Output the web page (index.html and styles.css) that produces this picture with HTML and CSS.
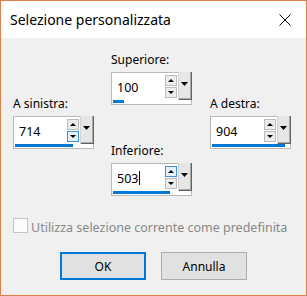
FILE: index.html
```html
<!DOCTYPE html>
<html lang="it">
<head>
    <meta charset="UTF-8">
    <meta name="viewport" content="width=device-width, initial-scale=1.0">
    <title>Selezione personalizzata</title>
    <link rel="stylesheet" href="styles.css">
</head>
<body>
    <div class="window">
        <div class="titlebar">
            <span class="title">Selezione personalizzata</span>
            <svg class="close" width="12" height="12" viewBox="0 0 12 12">
                <path d="M0.5 0.5 L11.5 11.5 M11.5 0.5 L0.5 11.5" stroke="#000" stroke-width="1" fill="none"/>
            </svg>
        </div>

        <div class="fields">
            <div class="group group-side">
                <div class="label">A sinistra:</div>
                <div class="spin">
                    <div class="spin-top">
                        <span class="spin-value">714</span>
                        <span class="spin-arrows">
                            <span class="arrow"><span class="tri tri-up"></span></span>
                            <span class="arrow active"><span class="tri tri-down"></span></span>
                        </span>
                        <span class="spin-drop"><span class="drop-tri"></span></span>
                    </div>
                    <div class="spin-bar" style="width: 58px"></div>
                </div>
            </div>

            <div class="col-mid">
                <div class="group">
                    <div class="label">Superiore:</div>
                    <div class="spin">
                        <div class="spin-top">
                            <span class="spin-value">100</span>
                            <span class="spin-arrows">
                                <span class="arrow"><span class="tri tri-up"></span></span>
                                <span class="arrow"><span class="tri tri-down"></span></span>
                            </span>
                            <span class="spin-drop"><span class="drop-tri"></span></span>
                        </div>
                        <div class="spin-bar" style="width: 11px"></div>
                    </div>
                </div>
                <div class="group">
                    <div class="label">Inferiore:</div>
                    <div class="spin">
                        <div class="spin-top">
                            <span class="spin-value">503<span class="caret"></span></span>
                            <span class="spin-arrows">
                                <span class="arrow active"><span class="tri tri-up"></span></span>
                                <span class="arrow"><span class="tri tri-down"></span></span>
                            </span>
                            <span class="spin-drop"><span class="drop-tri"></span></span>
                        </div>
                        <div class="spin-bar" style="width: 57px"></div>
                    </div>
                </div>
            </div>

            <div class="group group-side">
                <div class="label">A destra:</div>
                <div class="spin">
                    <div class="spin-top">
                        <span class="spin-value">904</span>
                        <span class="spin-arrows">
                            <span class="arrow"><span class="tri tri-up"></span></span>
                            <span class="arrow"><span class="tri tri-down"></span></span>
                        </span>
                        <span class="spin-drop"><span class="drop-tri"></span></span>
                    </div>
                    <div class="spin-bar" style="width: 73px"></div>
                </div>
            </div>
        </div>

        <div class="check">
            <span class="check-box"></span>
            <span class="check-text">Utilizza selezione corrente come predefinita</span>
        </div>

        <div class="buttons">
            <button class="btn btn-default">OK</button>
            <button class="btn">Annulla</button>
        </div>
    </div>
</body>
</html>
```

FILE: styles.css
```css
* {
    margin: 0;
    padding: 0;
    box-sizing: border-box;
}
body {
    font-family: "Noto Sans", "Open Sans", sans-serif;
    font-size: 12px;
    color: #000;
    background: #f0f0f0;
}
.window {
    width: 307px;
    height: 296px;
    border: 1px solid #db8048;
    background: #f0f0f0;
}
.titlebar {
    height: 37px;
    background: #fff;
    display: flex;
    align-items: center;
    justify-content: space-between;
    padding-left: 9px;
}
.title {
    font-size: 14px;
}
.close {
    margin-right: 15px;
}
.fields {
    display: grid;
    grid-template-columns: 98px 99px 81px;
    height: 144px;
    margin-top: 14px;
    padding-left: 12px;
}
.col-mid {
    display: flex;
    flex-direction: column;
    justify-content: space-between;
}
.group {
    width: 81px;
}
.group-side {
    align-self: start;
    margin-top: 44px;
}
.label {
    line-height: 16px;
    margin-bottom: 4px;
}
.spin {
    height: 33px;
    border: 1px solid #b9b9b9;
    background: #fff;
    display: flex;
    flex-direction: column;
}
.spin-top {
    flex: 1;
    display: flex;
}
.spin-value {
    flex: 1;
    display: flex;
    align-items: center;
    padding-left: 5px;
    padding-top: 1px;
    font-size: 12.5px;
}
.caret {
    display: inline-block;
    width: 1px;
    height: 14px;
    background: #000;
    margin-left: 1px;
}
.spin-arrows {
    display: flex;
    flex-direction: column;
    justify-content: center;
    gap: 1px;
    margin-right: 1px;
}
.arrow {
    width: 12px;
    height: 11px;
    border: 1px solid #bcbcbc;
    background: #ececec;
    display: flex;
    align-items: center;
    justify-content: center;
}
.arrow.active {
    border-color: #3c8fdc;
    background: #e5f1fb;
}
.tri {
    width: 0;
    height: 0;
    border-left: 3px solid transparent;
    border-right: 3px solid transparent;
}
.tri-up {
    border-bottom: 3px solid #000;
}
.tri-down {
    border-top: 3px solid #000;
}
.spin-drop {
    width: 14px;
    margin: -1px -1px 0 0;
    background: #e6e6e6;
    border-left: 1px solid #d4d4d4;
    box-shadow: inset -1px -1px 0 #646464, inset -2px -2px 0 #a8a8a8;
    display: flex;
    justify-content: center;
    padding-top: 10px;
    padding-right: 2px;
}
.drop-tri {
    width: 7px;
    height: 4px;
    background: #000;
    clip-path: polygon(0 0, 100% 0, 50% 100%);
}
.spin-bar {
    height: 3px;
    margin: 0 0 1px 1px;
    background: #0078d7;
}
.check {
    display: flex;
    align-items: flex-start;
    margin-top: 22px;
    padding-left: 12px;
    height: 15px;
}
.check-box {
    width: 15px;
    height: 15px;
    border: 1px solid #c4c4c4;
    background: #fcfcfc;
    margin-right: 3px;
}
.check-text {
    font-size: 12.5px;
    line-height: 15px;
    margin-top: 2px;
    color: #888;
}
.buttons {
    display: flex;
    justify-content: center;
    gap: 15px;
    margin-top: 19px;
}
.btn {
    width: 86px;
    height: 28px;
    font-family: inherit;
    font-size: 12px;
    color: #000;
    background: #e1e1e1;
    border: 1px solid #adadad;
}
.btn-default {
    border: 2px solid #0078d7;
}
```
